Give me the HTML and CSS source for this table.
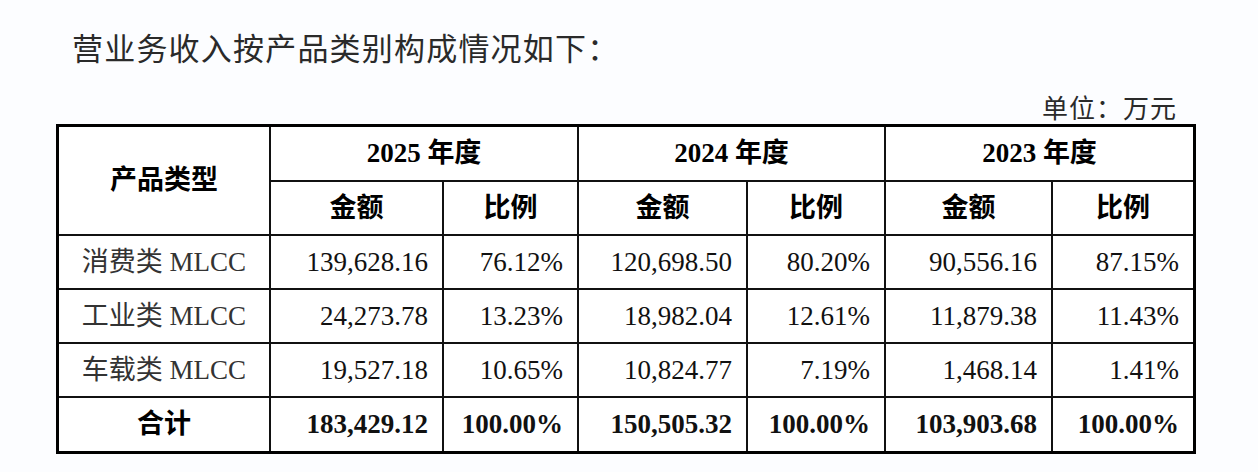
FILE: index.html
```html
<!DOCTYPE html>
<html lang="zh-CN">
<head>
<meta charset="utf-8">
<title>营业务收入按产品类别构成情况</title>
<link rel="stylesheet" href="styles.css">
</head>
<body>
<div class="page">
  <p class="title">营业务收入按产品类别构成情况如下：</p>
  <div class="report">
    <p class="unit">单位：万元</p>
    <table class="grid">
      <colgroup>
        <col class="c-type">
        <col class="c-amt1">
        <col class="c-pct1">
        <col class="c-amt2">
        <col class="c-pct2">
        <col class="c-amt3">
        <col class="c-pct3">
      </colgroup>
      <thead>
        <tr class="row-year">
          <th rowspan="2" class="label">产品类型</th>
          <th colspan="2">2025 年度</th>
          <th colspan="2">2024 年度</th>
          <th colspan="2" class="last">2023 年度</th>
        </tr>
        <tr class="row-sub">
          <th>金额</th>
          <th>比例</th>
          <th>金额</th>
          <th>比例</th>
          <th>金额</th>
          <th class="last">比例</th>
        </tr>
      </thead>
      <tbody>
        <tr class="row-data">
          <td class="label">消费类 MLCC</td>
          <td class="num">139,628.16</td>
          <td class="num">76.12%</td>
          <td class="num">120,698.50</td>
          <td class="num">80.20%</td>
          <td class="num">90,556.16</td>
          <td class="num last">87.15%</td>
        </tr>
        <tr class="row-data">
          <td class="label">工业类 MLCC</td>
          <td class="num">24,273.78</td>
          <td class="num">13.23%</td>
          <td class="num">18,982.04</td>
          <td class="num">12.61%</td>
          <td class="num">11,879.38</td>
          <td class="num last">11.43%</td>
        </tr>
        <tr class="row-data">
          <td class="label">车载类 MLCC</td>
          <td class="num">19,527.18</td>
          <td class="num">10.65%</td>
          <td class="num">10,824.77</td>
          <td class="num">7.19%</td>
          <td class="num">1,468.14</td>
          <td class="num last">1.41%</td>
        </tr>
        <tr class="row-total">
          <td class="label">合计</td>
          <td class="num">183,429.12</td>
          <td class="num">100.00%</td>
          <td class="num">150,505.32</td>
          <td class="num">100.00%</td>
          <td class="num">103,903.68</td>
          <td class="num last">100.00%</td>
        </tr>
      </tbody>
    </table>
  </div>
</div>
</body>
</html>
```

FILE: styles.css
```css
html, body {
  margin: 0;
  padding: 0;
  background: #fcfdff;
}

.page {
  padding: 31px 0 0 72px;
  font-family: "Liberation Serif", "Noto Sans CJK SC", serif;
  color: #111;
}

.title {
  margin: 0;
  font-family: "Noto Sans CJK SC", sans-serif;
  font-size: 31px;
  line-height: 31px;
  letter-spacing: 1.2px;
  color: #2a2a2a;
}

.report {
  margin: 32px 0 0 -16px;
  width: 1140px;
}

.unit {
  margin: 0 0 4px;
  padding-right: 19px;
  text-align: right;
  font-family: "Noto Sans CJK SC", sans-serif;
  font-size: 26px;
  line-height: 26px;
  letter-spacing: 1px;
  color: #2a2a2a;
}

.grid {
  width: 1140px;
  table-layout: fixed;
  border-collapse: separate;
  border-spacing: 0;
  border: 3px solid #000;
  background: #fff;
  font-size: 27px;
}

.c-type { width: 212px; }
.c-amt1 { width: 173px; }
.c-pct1 { width: 135px; }
.c-amt2 { width: 169px; }
.c-pct2 { width: 138px; }
.c-amt3 { width: 167px; }
.c-pct3 { width: 140px; }

.grid th,
.grid td {
  box-sizing: border-box;
  padding: 0;
  border-right: 2px solid #111;
  border-bottom: 2px solid #111;
  line-height: 1;
  white-space: nowrap;
  vertical-align: middle;
}

.grid .last {
  border-right: none;
}

.grid th {
  font-weight: bold;
  text-align: center;
  color: #000;
}

.row-year th { height: 55px; }
.row-sub th { height: 54px; }
.row-data td { height: 54px; }
.row-total td {
  height: 53px;
  border-bottom: none;
  font-weight: bold;
  color: #000;
}

.grid td.label {
  text-align: center;
  color: #333;
}

.row-total td.label {
  color: #000;
}

.grid td.num {
  text-align: right;
  padding-right: 14px;
  color: #111;
}
```
